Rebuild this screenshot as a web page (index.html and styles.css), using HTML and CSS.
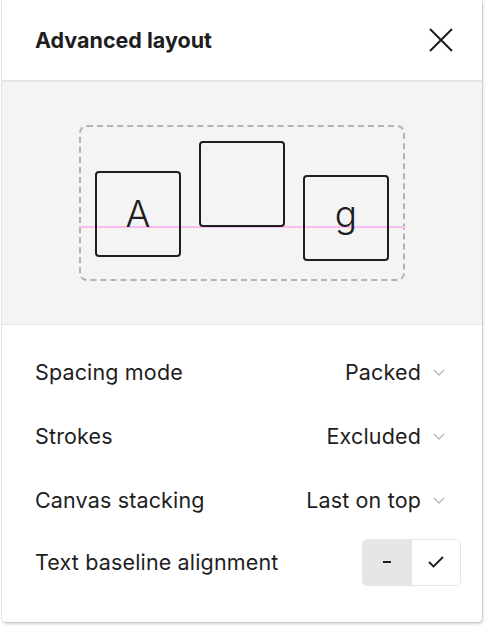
FILE: index.html
```html
<!DOCTYPE html>
<html>
<head>
<meta charset="utf-8">
<link rel="stylesheet" href="styles.css">
</head>
<body>
<div class="panel">
  <div class="header">
    <div class="title">Advanced layout</div>
    <svg class="close" width="24" height="24" viewBox="0 0 24 24"><path d="M1 1 L23 23 M23 1 L1 23" stroke="#1e1e1e" stroke-width="2" fill="none"/></svg>
  </div>
  <div class="preview">
    <div class="frame">
      <div class="baseline"></div>
      <div class="box box-a">A</div>
      <div class="box box-mid"></div>
      <div class="box box-g">g</div>
    </div>
  </div>
  <div class="settings">
    <div class="row">
      <span class="label">Spacing mode</span>
      <span class="select">Packed<svg class="chev" width="12" height="7" viewBox="0 0 12 7"><path d="M1 1 L6 6 L11 1" stroke="#b3b3b3" stroke-width="1.3" fill="none"/></svg></span>
    </div>
    <div class="row">
      <span class="label">Strokes</span>
      <span class="select">Excluded<svg class="chev" width="12" height="7" viewBox="0 0 12 7"><path d="M1 1 L6 6 L11 1" stroke="#b3b3b3" stroke-width="1.3" fill="none"/></svg></span>
    </div>
    <div class="row">
      <span class="label">Canvas stacking</span>
      <span class="select">Last on top<svg class="chev" width="12" height="7" viewBox="0 0 12 7"><path d="M1 1 L6 6 L11 1" stroke="#b3b3b3" stroke-width="1.3" fill="none"/></svg></span>
    </div>
    <div class="row row-last">
      <span class="label">Text baseline alignment</span>
      <div class="toggle">
        <div class="seg seg-on"><span class="dash"></span></div>
        <div class="seg"><svg width="16" height="12" viewBox="0 0 16 12"><path d="M1 6 L5.5 10.5 L15 1" stroke="#1e1e1e" stroke-width="1.8" fill="none"/></svg></div>
      </div>
    </div>
  </div>
</div>
</body>
</html>
```
FILE: styles.css
```css
html, body {
  margin: 0;
  padding: 0;
  background: #ffffff;
}
body {
  font-family: Inter, "Noto Sans", sans-serif;
  color: #1e1e1e;
  width: 486px;
  height: 626px;
  overflow: hidden;
}
.panel {
  margin-left: 2px;
  width: 480px;
  height: 622px;
  background: #fff;
  border-radius: 0 0 4px 4px;
  box-shadow: 0 0 0 1px rgba(0,0,0,0.08), 1px 2px 3px rgba(0,0,0,0.18);
  display: flex;
  flex-direction: column;
}
.header {
  display: flex;
  align-items: center;
  justify-content: space-between;
  padding: 0 29px 0 33px;
  border-bottom: 2px solid #e6e6e6;
  box-sizing: border-box;
  height: 82px;
}
.title {
  font-size: 21.5px;
  font-weight: 700;
}
.close {
  display: block;
}
.preview {
  height: 242px;
  background: #f4f4f4;
  border-bottom: 1px solid #e6e6e6;
  display: flex;
  align-items: center;
  justify-content: center;
}
.frame {
  position: relative;
  width: 326px;
  height: 156px;
  box-sizing: border-box;
  border: 2px dashed #b3b3b3;
  border-radius: 8px;
  display: flex;
  align-items: flex-start;
  gap: 18px;
  padding-left: 14px;
}
.baseline {
  position: absolute;
  left: -2px;
  right: -2px;
  top: 99px;
  height: 2px;
  background: #fbbdef;
}
.box {
  position: relative;
  width: 86px;
  height: 86px;
  box-sizing: border-box;
  border: 2px solid #1e1e1e;
  border-radius: 4px;
  font-size: 37px;
  font-weight: 300;
  display: flex;
  justify-content: center;
  line-height: 1;
}
.box-a {
  margin-top: 44px;
  padding-top: 22px;
}
.box-mid {
  margin-top: 14px;
}
.box-g {
  margin-top: 48px;
  padding-top: 18px;
}
.settings {
  padding-top: 15px;
}
.row {
  height: 64px;
  display: flex;
  align-items: center;
  justify-content: space-between;
  padding: 0 21px 0 33px;
  font-size: 21.5px;
  letter-spacing: 0.15px;
}
.row-last {
  height: 60px;
}
.select {
  display: flex;
  align-items: center;
  gap: 12px;
  margin-right: 16px;
}
.chev {
  display: block;
}
.toggle {
  display: flex;
  width: 99px;
  height: 47px;
  box-sizing: border-box;
  border: 1px solid #e6e6e6;
  border-radius: 5px;
  overflow: hidden;
}
.seg {
  flex: 1;
  display: flex;
  align-items: center;
  justify-content: center;
  background: #fff;
}
.seg-on {
  background: #e6e6e6;
}
.dash {
  width: 8px;
  height: 2px;
  background: #1e1e1e;
}
```
